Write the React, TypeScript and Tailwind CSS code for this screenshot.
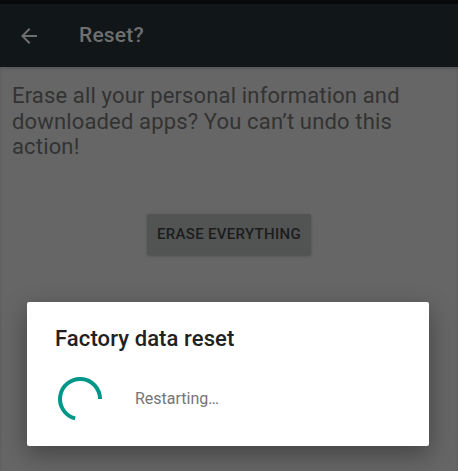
import React from 'react';

const font = { fontFamily: 'Roboto, "Noto Sans", sans-serif' };

// spinner arc: from east, counter-clockwise over the top, ending near the bottom
const Spinner: React.FC = () => {
  const r = 20;
  const cx = 24;
  const cy = 24;
  const end = (256 * Math.PI) / 180;
  const ex = cx + r * Math.cos(end);
  const ey = cy - r * Math.sin(end);
  return (
    <svg width="48" height="48" viewBox="0 0 48 48" className="shrink-0">
      <path
        d={`M ${cx + r} ${cy} A ${r} ${r} 0 1 0 ${ex.toFixed(2)} ${ey.toFixed(2)}`}
        fill="none"
        stroke="#009688"
        strokeWidth="4"
      />
    </svg>
  );
};

const App: React.FC = () => {
  return (
    <div className="relative w-[458px] h-[471px] overflow-hidden flex flex-col bg-[#666666]" style={font}>
      {/* status bar */}
      <div className="h-[4px] bg-[#07080a]" />

      {/* toolbar */}
      <div className="h-[63px] bg-[#111619] flex items-center">
        <svg width="24" height="24" viewBox="0 0 24 24" className="ml-[17px]" fill="#6f6f6f">
          <path d="M20 11H7.83l5.59-5.59L12 4l-8 8 8 8 1.41-1.41L7.83 13H20v-2z" />
        </svg>
        <span className="ml-[38px] text-[21px] font-medium text-[#6f6f6f] tracking-[0.2px]">Reset?</span>
      </div>

      {/* content under scrim */}
      <div className="flex-1 flex flex-col shadow-[inset_0_2px_3px_rgba(0,0,0,0.15)]">
        <p className="px-[12px] pt-[16px] text-[22px] leading-[25.5px] tracking-[0.15px] text-[#333333]">
          Erase all your personal information and downloaded apps? You can’t undo this action!
        </p>
        <div className="flex justify-center mt-[54px]">
          <div className="w-[164px] h-[41px] rounded-[2px] bg-[#525454] shadow-[0_1px_3px_rgba(0,0,0,0.25)] flex items-center justify-center text-[15px] font-medium text-[#1c1c1c] tracking-[0.3px]">
            ERASE EVERYTHING
          </div>
        </div>
      </div>

      {/* dialog */}
      <div className="absolute left-[27px] top-[302px] w-[402px] h-[144px] bg-white rounded-[2px] shadow-[0_8px_24px_rgba(0,0,0,0.35)] flex flex-col">
        <div className="pl-[28px] pt-[23px] text-[22px] font-medium text-[#212121] leading-[28px] tracking-[0.1px]">
          Factory data reset
        </div>
        <div className="flex items-center pl-[29px] mt-[22px]">
          <Spinner />
          <span className="ml-[31px] text-[16px] text-[#757575]">Restarting…</span>
        </div>
      </div>
    </div>
  );
};

export default App;
